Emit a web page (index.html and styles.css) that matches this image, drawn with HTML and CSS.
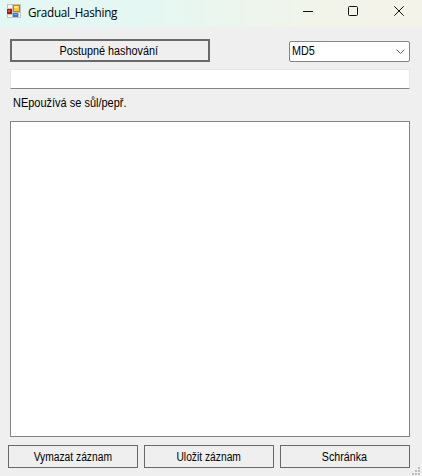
FILE: index.html
```html
<!DOCTYPE html>
<html lang="cs">
<head>
<meta charset="utf-8">
<title>Gradual_Hashing</title>
<link rel="stylesheet" href="styles.css">
</head>
<body>
<div class="window">
  <header class="titlebar">
    <svg class="app-icon" width="14" height="15" viewBox="0 0 14 15">
      <path fill="#bfc4c6" d="M0 0h14v14H0z"/>
      <path fill="#f4f6f7" d="M1 1h4v3H1zM1 11h4v2H1zM12 9h1v4h-1z"/>
      <path fill="#a81c14" d="M0 5h5v5H0z"/><path fill="#e0503c" d="M1 6h2v2H1z"/>
      <path fill="#bd8412" d="M6 1h7v7H6z"/><path fill="#fbc83c" d="M7 2h5v5H7z"/><path fill="#ffe58c" d="M7 2h4v2H7z"/>
      <path fill="#3f74d0" d="M6 9h5v4H6z"/><path fill="#75a8f4" d="M7 10h3v1H7z"/>
    </svg>
    <h1 class="title">Gradual_Hashing</h1>
    <div class="controls">
      <svg width="10" height="11" viewBox="0 0 10 11"><path d="M0 5.5h10"/></svg>
      <svg width="10" height="11" viewBox="0 0 10 11"><rect x=".5" y=".5" width="9" height="9" rx="1"/></svg>
      <svg width="10" height="11" viewBox="0 0 10 11"><path d="M.3.3l9.4 9.4M9.7.3L.3 9.7"/></svg>
    </div>
  </header>
  <main class="content">
    <div class="toolbar">
      <button class="button primary"><span class="t-hash">Postupné hashování</span></button>
      <div class="combo"><span class="t-md">MD5</span>
        <svg width="9" height="5" viewBox="0 0 9 5"><path d="M.5.5l4 4 4-4"/></svg>
      </div>
    </div>
    <div class="input"></div>
    <p class="note"><span class="t-note">NEpoužívá se sůl/pepř.</span></p>
    <div class="log"></div>
  </main>
  <footer class="actions">
    <button class="button"><span class="t-clear">Vymazat záznam</span></button>
    <button class="button"><span class="t-save">Uložit záznam</span></button>
    <button class="button"><span class="t-clip">Schránka</span></button>
  </footer>
  <svg class="grip" width="10" height="9" viewBox="0 0 10 9"><path d="M6 0h2v2H6zM3 3h2v2H3zM6 3h2v2H6zM0 6h2v2H0zM3 6h2v2H3zM6 6h2v2H6z"/></svg>
</div>
</body>
</html>
```

FILE: styles.css
```css
* { box-sizing: border-box; }
body { margin: 0; }
.window {
  position: relative;
  width: 422px;
  height: 476px;
  overflow: hidden;
  background: #efefef;
  color: #000;
  font: 12px/14px "Liberation Sans", Arial, sans-serif;
}
.titlebar {
  display: flex;
  height: 27px;
  padding: 4px 18px 0 7px;
  background: linear-gradient(90deg, #e3f7f4 0%, #e5f7f2 35%, #f2f4e9 75%, #f4f3e9 100%);
}
.title {
  margin: 0 0 0 7px;
  font: 400 11.7px/16px "Open Sans", "Noto Sans", sans-serif;
  letter-spacing: -0.25px;
}
.controls {
  display: flex;
  gap: 36px;
  margin: 2px 0 0 auto;
}
.controls svg { fill: none; stroke: #111; stroke-width: 1; }
.controls svg:first-child { margin-right: -1px; }
.content { padding: 12px 12px 0 10px; }
.toolbar { display: flex; justify-content: space-between; height: 23px; }
.button {
  display: flex;
  align-items: center;
  justify-content: center;
  width: 130px;
  height: 23px;
  padding: 0;
  border: 1px solid #696969;
  background: #efefef;
  color: #000;
  font: inherit;
}
.primary { width: 200px; border-width: 2px; }
.combo {
  display: flex;
  align-items: center;
  justify-content: space-between;
  width: 121px;
  height: 21px;
  margin-top: 2px;
  padding: 0 4px 0 2px;
  border: 1px solid #858585;
  border-radius: 2px;
  background: #fff;
}
.combo svg { fill: none; stroke: #606060; }
.input {
  height: 20px;
  margin-top: 7px;
  border: 1px solid #e8e8e8;
  border-bottom-color: #868686;
  background: #fff;
}
.note { height: 14px; margin: 7px 0 0 3px; }
.log {
  height: 316px;
  margin-top: 11px;
  border: 1px solid #82828a;
  background: #fff;
}
.actions { display: flex; gap: 6px; padding: 8px 0 0 8px; }
.button span, .combo span, .note span { display: inline-block; white-space: nowrap; }
.t-hash { transform: translateX(-1px) scaleX(0.9); }
.t-md { transform: translateY(-1px) scaleX(0.9); transform-origin: left; }
.t-note { transform: scaleX(0.915); transform-origin: left; }
.t-clear { transform: scaleX(0.855); }
.t-save { transform: scaleX(0.855); }
.t-clip { transform: translateX(-1px) scaleX(0.89); }
.grip { position: absolute; right: 0; bottom: 0; fill: #bdbdbd; }
```
